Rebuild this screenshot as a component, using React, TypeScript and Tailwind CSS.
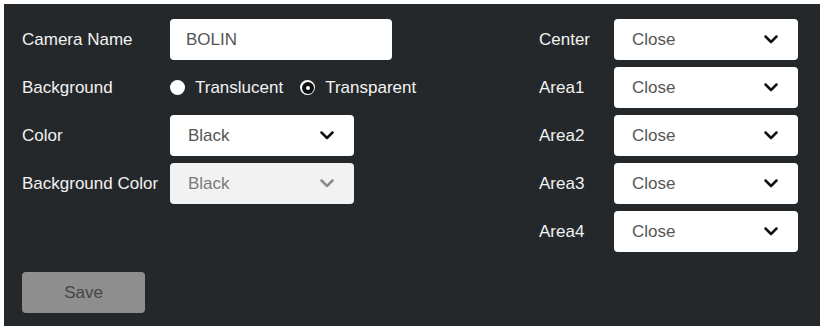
import React from "react";

const font = { fontFamily: '"Liberation Sans", Arial, sans-serif' };

function Chevron({ disabled }: { disabled?: boolean }) {
  return (
    <svg width="14" height="9" viewBox="0 0 14 9" className="shrink-0">
      <polyline
        points="1.5,1.5 7,7 12.5,1.5"
        fill="none"
        stroke={disabled ? "#8a8a8a" : "#111111"}
        strokeWidth="2.5"
        strokeLinecap="round"
        strokeLinejoin="round"
      />
    </svg>
  );
}

function Select({ value, disabled }: { value: string; disabled?: boolean }) {
  return (
    <div
      className={`w-[184px] h-[41px] rounded-[4px] flex items-center justify-between pl-[18px] pr-[20px] ${
        disabled ? "bg-[#f2f2f2] text-[#7a7a7a]" : "bg-white text-[#555555]"
      }`}
    >
      <span>{value}</span>
      <Chevron disabled={disabled} />
    </div>
  );
}

function Radio({ checked }: { checked?: boolean }) {
  return (
    <div className="w-[15px] h-[15px] rounded-full bg-white flex items-center justify-center shrink-0">
      {checked && (
        <div className="w-[12px] h-[12px] rounded-full bg-[#111] flex items-center justify-center">
          <div className="w-[4px] h-[4px] rounded-full bg-white" />
        </div>
      )}
    </div>
  );
}

export default function App() {
  return (
    <div className="w-[822px] h-[330px] bg-white pl-[4px] pt-[4px]" style={font}>
      <div className="w-[816px] h-[322px] bg-[#25282a] pt-[15px] pl-[18px] pr-[22px] flex justify-between text-[17px] text-[#f2f2f2]">
        <div className="flex flex-col">
          <div className="flex flex-col gap-[7px]">
            <div className="flex items-center h-[41px]">
              <div className="w-[148px]">Camera Name</div>
              <div className="w-[222px] h-[41px] rounded-[4px] bg-white text-[#555555] flex items-center pl-[16px]">
                BOLIN
              </div>
            </div>
            <div className="flex items-center h-[41px]">
              <div className="w-[148px]">Background</div>
              <div className="flex items-center gap-[10px]">
                <Radio />
                <span>Translucent</span>
              </div>
              <div className="flex items-center gap-[10px] ml-[17px]">
                <Radio checked />
                <span>Transparent</span>
              </div>
            </div>
            <div className="flex items-center h-[41px]">
              <div className="w-[148px]">Color</div>
              <Select value="Black" />
            </div>
            <div className="flex items-center h-[41px]">
              <div className="w-[148px]">Background Color</div>
              <Select value="Black" disabled />
            </div>
          </div>
          <div className="mt-[68px] w-[123px] h-[41px] rounded-[4px] bg-[#8e8e8e] text-[#454545] flex items-center justify-center">
            Save
          </div>
        </div>
        <div className="flex flex-col gap-[7px]">
          {["Center", "Area1", "Area2", "Area3", "Area4"].map((l) => (
            <div key={l} className="flex items-center h-[41px]">
              <div className="w-[75px]">{l}</div>
              <Select value="Close" />
            </div>
          ))}
        </div>
      </div>
    </div>
  );
}
